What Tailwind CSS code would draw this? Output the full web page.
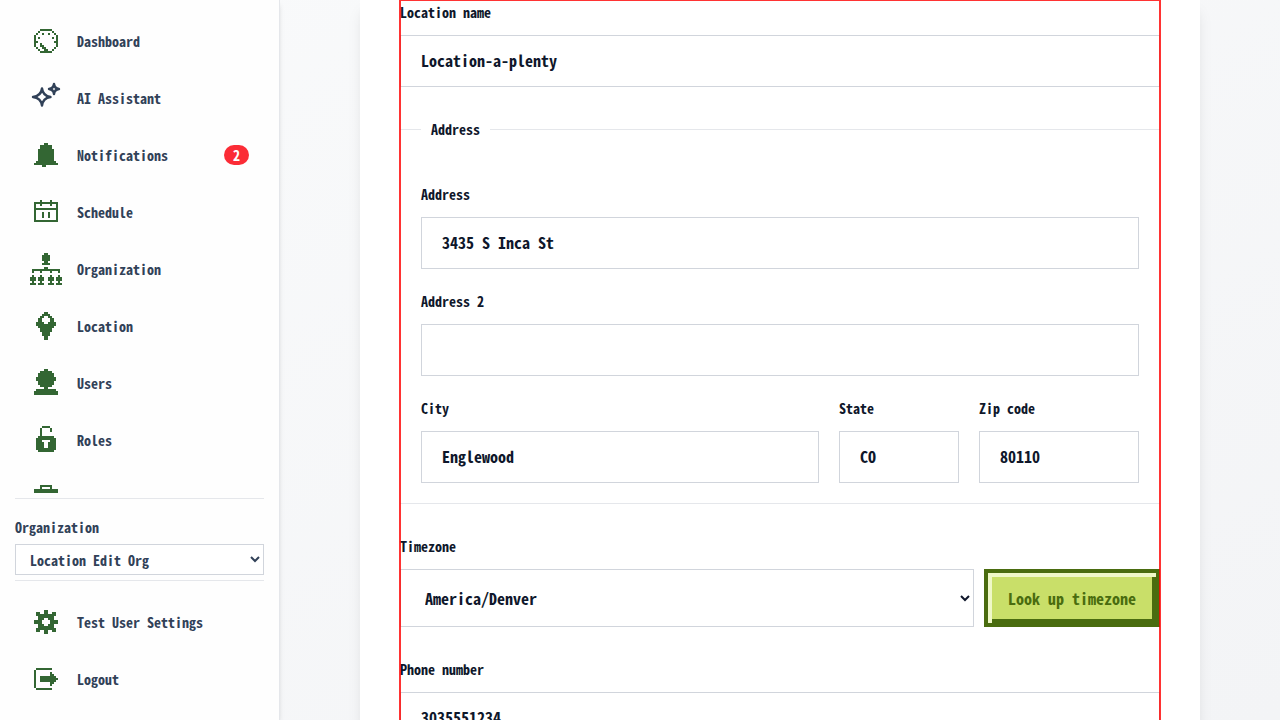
<!DOCTYPE html>
<html lang="en">
<head>
    <meta charset="UTF-8">
    <meta name="viewport" content="width=device-width, initial-scale=1.0">
    <title>Edit location</title>
    <script src="https://cdn.jsdelivr.net/npm/@tailwindcss/browser@4"></script>
</head>
<body class="h-screen overflow-hidden flex bg-linear-to-br from-[#f9fafb] to-[#f3f4f6] font-['Noto_Sans_Mono_CJK_JP','Liberation_Mono',monospace] text-slate-900">

    <aside class="w-[280px] shrink-0 h-full flex flex-col bg-[#fefefe] border-r border-gray-200 shadow-md px-[15px] text-sm font-bold text-slate-700">
        <nav class="flex-1 min-h-0 overflow-hidden pt-3 mb-[5px]">
            <a href="#" class="flex items-center gap-[15px] h-[57px] px-[15px]">
                <svg class="w-8 h-6 shrink-0" viewBox="-2 0 16 12" fill="none" stroke="#336633" shape-rendering="crispEdges" aria-hidden="true"><path d="M3 .5h6M2 1.5h1M9 1.5h1M1 2.5h1M4 2.5h1M7 2.5h1M10 2.5h1M0 3.5h1M11 3.5h1M0 4.5h1M2 4.5h1M9 4.5h1M11 4.5h1M0 5.5h1M11 5.5h1M0 6.5h2M10 6.5h2M0 7.5h1M3 7.5h1M11 7.5h1M0 8.5h1M3 8.5h2M11 8.5h1M1 9.5h1M4 9.5h2M10 9.5h1M2 10.5h1M5 10.5h2M9 10.5h1M3 11.5h6"/></svg>
                <span>Dashboard</span>
            </a>
            <a href="#" class="flex items-center gap-[15px] h-[57px] px-[15px]">
                <svg class="w-8 h-8 shrink-0" viewBox="0 0 32 32" fill="none" stroke="currentColor" stroke-width="2.4" stroke-linejoin="round" aria-hidden="true"><path d="M12 6.5Q13 14 20.500 15Q13 16 12 23.500Q11 16 3 15Q11 14 12 6.500ZM24 2Q24.500 6.500 29 7Q24.500 7.500 24 12Q23.500 7.500 19 7Q23.500 6.500 24 2Z"/></svg>
                <span>AI Assistant</span>
            </a>
            <a href="#" class="flex items-center gap-[15px] h-[57px] px-[15px]">
                <svg class="w-8 h-6 shrink-0" viewBox="-2 0 16 12" fill="none" stroke="#336633" shape-rendering="crispEdges" aria-hidden="true"><path d="M5 .5h2M3 1.5h6M3 2.5h6M2 3.5h8M2 4.5h8M2 5.5h8M2 6.5h8M2 7.5h8M2 8.5h8M1 9.5h10M0 10.500h12M4 11.500h2"/></svg>
                <span>Notifications</span>
                <span class="ml-auto rounded-full bg-[#fb2c36] text-white text-sm leading-5 px-[9px]">2</span>
            </a>
            <a href="#" class="flex items-center gap-[15px] h-[57px] px-[15px]">
                <svg class="w-8 h-6 shrink-0" viewBox="-2 0 16 12" fill="none" stroke="#336633" shape-rendering="crispEdges" aria-hidden="true"><path d="M3.500 0v3M8.500 0v3M.5 1.500h11v9H.5zM0 4.500h12M4.500 6v3M7.500 6v3"/></svg>
                <span>Schedule</span>
            </a>
            <a href="#" class="flex items-center gap-[15px] h-[57px] px-[15px]">
                <svg class="w-8 h-8 shrink-0" viewBox="0 0 16 16" fill="none" stroke="#336633" shape-rendering="crispEdges" aria-hidden="true"><path d="M7 .5h2M6 1.500h4M6 2.500h4M6 3.500h4M7 4.500h2M6 5.500h4M7 7.500h2M1 8.500h14M1 9.500h1M5 9.500h1M10 9.500h1M14 9.500h1M1 11.500h1M5 11.500h1M10 11.500h1M14 11.500h1M0 12.500h3M4 12.500h3M9 12.500h3M13 12.500h3M0 13.500h3M4 13.500h3M9 13.500h3M13 13.500h3M1 14.500h1M5 14.500h1M10 14.500h1M14 14.500h1M0 15.500h3M4 15.500h3M9 15.500h3M13 15.500h3"/></svg>
                <span>Organization</span>
            </a>
            <a href="#" class="flex items-center gap-[15px] h-[57px] px-[15px]">
                <svg class="w-8 h-7 shrink-0" viewBox="-3 0 16 14" fill="none" stroke="#336633" shape-rendering="crispEdges" aria-hidden="true"><path d="M4 .5h2M3 1.500h4M2 2.500h2M6 2.500h2M1 3.500h2M7 3.500h2M1 4.500h2M7 4.500h2M0 5.500h4M6 5.500h4M0 6.500h10M1 7.500h8M2 8.500h6M2 9.500h6M3 10.500h4M3 11.500h4M4 12.500h2M4 13.500h2"/></svg>
                <span>Location</span>
            </a>
            <a href="#" class="flex items-center gap-[15px] h-[57px] px-[15px]">
                <svg class="w-8 h-7 shrink-0" viewBox="-2 0 16 14" fill="none" stroke="#336633" shape-rendering="crispEdges" aria-hidden="true"><path d="M5 .5h2M3 1.500h6M2 2.500h8M2 3.500h8M1 4.500h10M1 5.500h10M2 6.500h8M2 7.500h8M3 8.500h6M5 9.500h2M1 10.500h10M0 11.500h12M0 12.500h12"/></svg>
                <span>Users</span>
            </a>
            <a href="#" class="flex items-center gap-[15px] h-[57px] px-[15px]">
                <svg class="w-8 h-7 shrink-0" viewBox="-3 0 16 14" fill="none" stroke="#336633" shape-rendering="crispEdges" aria-hidden="true"><path d="M3 .5h4M2 1.500h1M7 1.500h1M2 2.500h1M7 2.500h1M2 3.500h1M2 4.500h1M1 5.500h8M0 6.500h10M0 7.500h3M7 7.500h3M0 8.500h4M6 8.500h4M0 9.500h4M6 9.500h4M0 10.500h4M6 10.500h4M0 11.500h10M1 12.500h8"/></svg>
                <span>Roles</span>
            </a>
            <a href="#" class="flex items-center gap-[15px] h-[57px] px-[15px]" aria-label="Jobs">
                <svg class="w-8 h-6 shrink-0" viewBox="-2 0 16 12" fill="none" stroke="#336633" shape-rendering="crispEdges" aria-hidden="true"><path d="M3 .5h6M3 1.500h1M8 1.500h1M0 2.500h12M0 3.500h12M0 4.500h12M0 5.500h12M0 7.500h12M0 8.500h12M0 9.500h12M0 10.500h12"/></svg>
            </a>
        </nav>

        <div class="border-y border-gray-200 pt-[18px] pb-[5px]">
            <label for="org" class="block leading-5 mb-[7px]">Organization</label>
            <select id="org" class="block w-full h-[31px] border border-gray-300 bg-white px-[10px]">
                <option>Location Edit Org</option>
            </select>
        </div>

        <div class="pt-3 pb-[13px]">
            <a href="#" class="flex items-center gap-[15px] h-[57px] px-[15px]">
                <svg class="w-8 h-6 shrink-0" viewBox="-2 0 16 12" fill="none" stroke="#336633" shape-rendering="crispEdges" aria-hidden="true"><path d="M5 .5h2M1 1.500h2M5 1.500h2M9 1.500h2M1 2.500h10M2 3.500h8M2 4.500h3M7 4.500h3M0 5.500h4M8 5.500h4M0 6.500h4M8 6.500h4M2 7.500h3M7 7.500h3M2 8.500h8M1 9.500h10M1 10.500h2M5 10.500h2M9 10.500h2M5 11.500h2"/></svg>
                <span>Test User Settings</span>
            </a>
            <a href="#" class="flex items-center gap-[15px] h-[57px] px-[15px]">
                <svg class="w-8 h-[22px] shrink-0" viewBox="-2 0 16 11" fill="none" stroke="#336633" shape-rendering="crispEdges" aria-hidden="true"><path d="M1 .5h8M.5 1v9M1 10.500h8M3 4.500h8M3 5.500h9M3 6.500h8M8.500 2v7M9.500 3v5"/></svg>
                <span>Logout</span>
            </a>
        </div>
    </aside>

    <main class="flex-1 min-w-0 h-full overflow-hidden px-20">
        <div class="bg-white shadow-lg px-10">
            <form class="relative flex flex-col gap-8 pt-[2px] pb-10 font-bold">
                <div>
                    <label for="name" class="block text-sm leading-5 mb-[13px]">Location name</label>
                    <input id="name" type="text" value="Location-a-plenty" class="block w-full h-[52px] border border-gray-300 bg-white px-5 pb-[2px]">
                </div>

                <fieldset class="border-y border-gray-200 px-[21px] pb-5">
                    <legend class="px-[10px] text-sm leading-5">Address</legend>
                    <div class="flex flex-col gap-[22px] pt-[45px]">
                        <div>
                            <label for="address" class="block text-sm leading-5 mb-[13px]">Address</label>
                            <input id="address" type="text" value="3435 S Inca St" class="block w-full h-[52px] border border-gray-300 bg-white px-5 pb-[2px]">
                        </div>
                        <div>
                            <label for="address2" class="block text-sm leading-5 mb-[13px]">Address 2</label>
                            <input id="address2" type="text" class="block w-full h-[52px] border border-gray-300 bg-white px-5 pb-[2px]">
                        </div>
                        <div class="flex gap-5">
                            <div class="flex-1 min-w-0">
                                <label for="city" class="block text-sm leading-5 mb-[13px]">City</label>
                                <input id="city" type="text" value="Englewood" class="block w-full h-[52px] border border-gray-300 bg-white px-5 pb-[2px]">
                            </div>
                            <div class="w-[120px]">
                                <label for="state" class="block text-sm leading-5 mb-[13px]">State</label>
                                <input id="state" type="text" value="CO" class="block w-full h-[52px] border border-gray-300 bg-white px-5 pb-[2px]">
                            </div>
                            <div class="w-[160px]">
                                <label for="zip" class="block text-sm leading-5 mb-[13px]">Zip code</label>
                                <input id="zip" type="text" value="80110" class="block w-full h-[52px] border border-gray-300 bg-white px-5 pb-[2px]">
                            </div>
                        </div>
                    </div>
                </fieldset>

                <div>
                    <label for="timezone" class="block text-sm leading-5 mb-[13px]">Timezone</label>
                    <div class="flex gap-[10px]">
                        <select id="timezone" class="flex-1 min-w-0 h-[58px] border border-gray-300 bg-white px-5">
                            <option>America/Denver</option>
                        </select>
                        <button type="button" class="h-[58px] px-5 border-4 border-[#4a6c0f] bg-[#c9df69] text-[#4a6c0f] shadow-[inset_4px_4px_0_#eff8c8,inset_-4px_-4px_0_#4a6c0f]">Look up timezone</button>
                    </div>
                </div>

                <div>
                    <label for="phone" class="block text-sm leading-5 mb-[13px]">Phone number</label>
                    <input id="phone" type="tel" value="3035551234" class="block w-full h-[52px] border border-gray-300 bg-white px-5 pb-[2px]">
                </div>

                <!-- highlight frame around the form -->
                <div class="absolute -inset-px border-2 border-[#ff0000]/80 pointer-events-none"></div>
            </form>
        </div>
    </main>

</body>
</html>
